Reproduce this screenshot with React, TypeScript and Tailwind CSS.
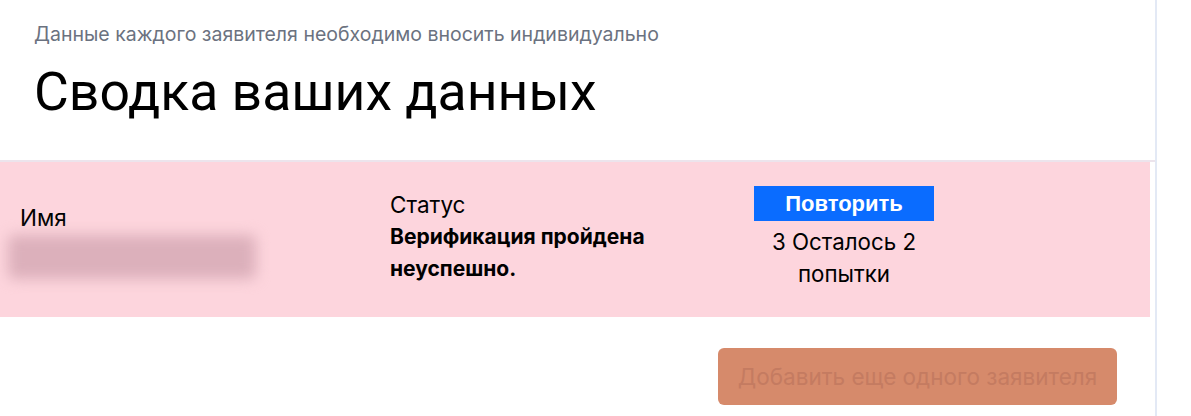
export default function App() {
  return (
    <div className="min-h-[416px] w-full bg-white font-['Inter',sans-serif]">
      <div className="w-[1157px] min-h-[416px] border-r-2 border-[#e3e9f5]">
        <header className="pl-[34px] pt-[22px]">
          <p className="text-[19.5px] leading-[24px] text-[#6b7280]">
            Данные каждого заявителя необходимо вносить индивидуально
          </p>
          <h1 className="mt-[14px] font-['Roboto',sans-serif] text-[53.5px] leading-[64px] text-black">
            Сводка ваших данных
          </h1>
        </header>

        <div className="mt-[36px] border-t-2 border-[#ece4ec] pr-[3px]">
          <div className="flex h-[155px] w-[1150px] items-start bg-[#fdd5dd] text-black">
            <div className="w-[390px] pl-[20px] pt-[44px]">
              <div className="text-[22.5px] leading-[24px]">Имя</div>
              <div className="ml-[-12px] mt-[5px] h-[44px] w-[248px] rounded-md bg-[#dcb0bb] blur-[7px]" />
            </div>
            <div className="w-[344px] pt-[27px]">
              <div className="text-[22.5px] leading-[32px]">Статус</div>
              <div className="text-[21px] font-bold leading-[32px]">
                Верификация пройдена
                <br />
                неуспешно.
              </div>
            </div>
            <div className="flex w-[220px] flex-col items-center pt-[24px]">
              <button
                type="button"
                className="h-[35px] w-[180px] bg-[#0a6cff] font-['Liberation_Sans',sans-serif] text-[22px] font-bold text-white"
              >
                Повторить
              </button>
              <div className="mt-[5px] text-center text-[22.3px] leading-[32px]">
                3 Осталось 2
                <br />
                попытки
              </div>
            </div>
          </div>
        </div>

        <div className="flex justify-end pr-[38px] pt-[31px]">
          <button
            type="button"
            className="h-[57px] w-[399px] rounded-md bg-[#d68a6b] text-[22.5px] text-[#c47b61]"
          >
            Добавить еще одного заявителя
          </button>
        </div>
      </div>
    </div>
  );
}
